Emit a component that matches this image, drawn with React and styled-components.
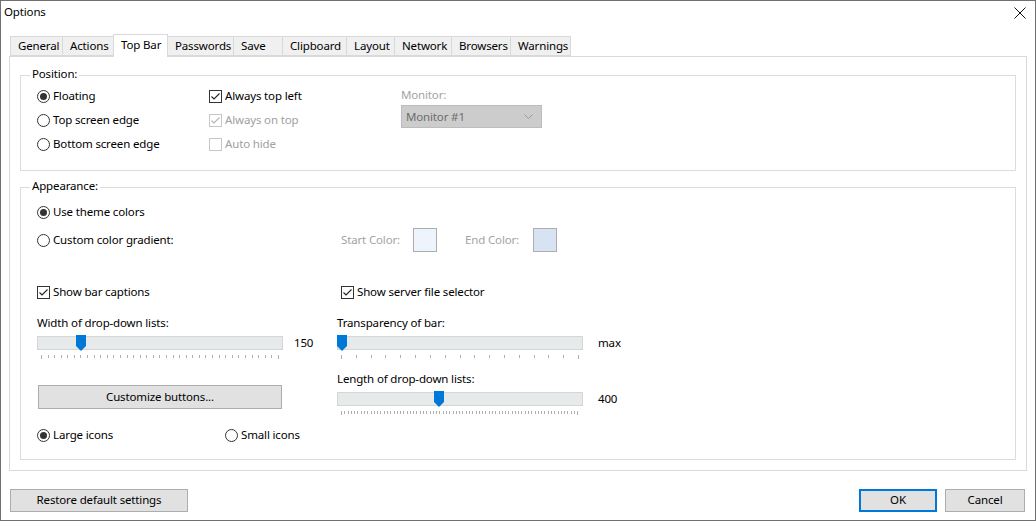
import React from 'react';
import styled, { createGlobalStyle } from 'styled-components';

const GlobalStyle = createGlobalStyle`
  html, body { margin: 0; padding: 0; background: #fff; }
  body {
    font-family: "Noto Sans", "Segoe UI", sans-serif;
    font-size: 11.5px;
    letter-spacing: -0.15px;
    color: #000;
  }
  * { box-sizing: border-box; }
`;

const tabs = [
  { name: 'General', w: 53 },
  { name: 'Actions', w: 52 },
  { name: 'Top Bar', w: 55, active: true },
  { name: 'Passwords', w: 67 },
  { name: 'Save', w: 50 },
  { name: 'Clipboard', w: 65 },
  { name: 'Layout', w: 49 },
  { name: 'Network', w: 58 },
  { name: 'Browsers', w: 60 },
  { name: 'Warnings', w: 61 },
];

export default function App() {
  return (
    <>
      <GlobalStyle />
      <Window>
        <TitleBar>
          <Title>Options</Title>
          <CloseIcon width="12" height="12" viewBox="0 0 12 12">
            <path d="M0.5 0.5 L11.5 11.5 M11.5 0.5 L0.5 11.5" stroke="#111" strokeWidth="1" />
          </CloseIcon>
        </TitleBar>

        <TabStrip>
          {tabs.map((t) => (
            <Tab key={t.name} $w={t.w} $active={t.active}>{t.name}</Tab>
          ))}
        </TabStrip>

        <Panel>
          <Group $h={96}>
            <Legend>Position:</Legend>
            <PositionGrid>
              <Radio on>Floating</Radio>
              <Check on>Always top left</Check>
              <MonitorCell>
                <FieldLabel $disabled>Monitor:</FieldLabel>
                <Select>
                  <span>Monitor #1</span>
                  <svg width="9" height="5" viewBox="0 0 9 5">
                    <path d="M0.5 0.5 L4.5 4.5 L8.5 0.5" fill="none" stroke="#9a9a9a" />
                  </svg>
                </Select>
              </MonitorCell>
              <Radio>Top screen edge</Radio>
              <Check on disabled>Always on top</Check>
              <Radio>Bottom screen edge</Radio>
              <Check disabled>Auto hide</Check>
            </PositionGrid>
          </Group>

          <Group $h={273} $mt={16}>
            <Legend>Appearance:</Legend>
            <AppearanceBody>
              <Row $h={28}>
                <Radio on>Use theme colors</Radio>
              </Row>
              <TwoCol $h={28} $left={304}>
                <Radio>Custom color gradient:</Radio>
                <ColorPickers>
                  <FieldLabel $disabled $w={72}>Start Color:</FieldLabel>
                  <Swatch $c="#eef4fb" />
                  <FieldLabel $disabled $w={68} $ml={28}>End Color:</FieldLabel>
                  <Swatch $c="#d7e3f3" />
                </ColorPickers>
              </TwoCol>
              <TwoCol $h={24} $left={304} $mt={26}>
                <Check on>Show bar captions</Check>
                <Check on>Show server file selector</Check>
              </TwoCol>
              <SliderBlock>
                <Column>
                  <Slider label="Width of drop-down lists:" value="150" frac={0.165} ticks={36} gap={11} />
                  <PushButton>Customize buttons...</PushButton>
                </Column>
                <Column>
                  <Slider label="Transparency of bar:" value="max" frac={0} ticks={16} gap={15} />
                  <Slider label="Length of drop-down lists:" value="400" frac={0.413} ticks={72} gap={15} mt={11} />
                </Column>
              </SliderBlock>
              <Row $h={24} $mt={7}>
                <IconChoice>
                  <Radio on>Large icons</Radio>
                </IconChoice>
                <Radio>Small icons</Radio>
              </Row>
            </AppearanceBody>
          </Group>
        </Panel>

        <Footer>
          <FooterButton $w={178}>Restore default settings</FooterButton>
          <FooterRight>
            <FooterButton $w={78} $primary>OK</FooterButton>
            <FooterButton $w={80}>Cancel</FooterButton>
          </FooterRight>
        </Footer>
      </Window>
    </>
  );
}

function Radio({ on, children }) {
  return (
    <OptionRow>
      <RadioCircle $on={on} />
      <OptionText>{children}</OptionText>
    </OptionRow>
  );
}

function Check({ on, disabled, children }) {
  return (
    <OptionRow>
      <CheckBox $disabled={disabled}>
        {on && (
          <svg width="11" height="11" viewBox="0 0 11 11">
            <polyline points="1.5,5.5 4,8 9.5,2.5" fill="none" stroke={disabled ? '#b4b4b4' : '#222'} strokeWidth="1.1" />
          </svg>
        )}
      </CheckBox>
      <OptionText $disabled={disabled}>{children}</OptionText>
    </OptionRow>
  );
}

function Slider({ label, value, frac, ticks, gap, mt }) {
  const marks = Array.from({ length: ticks + 1 }, (_, i) => i);
  return (
    <SliderField $mt={mt}>
      <FieldLabel>{label}</FieldLabel>
      <SliderRow>
        <SliderBox>
          <Track>
            <Thumb width="10" height="16" viewBox="0 0 10 16" style={{ left: `${3 + frac * 237 - 4.5}px` }}>
              <polygon points="0,0 10,0 10,11 5,16 0,11" fill="#0078d7" />
            </Thumb>
          </Track>
          <Ticks>
            {marks.map((i) => (
              <TickMark key={i} $end={i === 0 || i === ticks} />
            ))}
          </Ticks>
        </SliderBox>
        <SliderValue $gap={gap}>{value}</SliderValue>
      </SliderRow>
    </SliderField>
  );
}

const Window = styled.div`
  width: 1036px;
  height: 521px;
  border: 1px solid #707070;
  background: #fff;
  display: flex;
  flex-direction: column;
`;

const TitleBar = styled.div`
  height: 33px;
  display: flex;
  justify-content: space-between;
  align-items: flex-start;
  padding: 3px 9px 0 3px;
`;

const Title = styled.div`
  line-height: 16px;
`;

const CloseIcon = styled.svg`
  margin-top: 3px;
`;

const TabStrip = styled.div`
  height: 22px;
  display: flex;
  align-items: flex-end;
  padding-left: 9px;
`;

const Tab = styled.div`
  width: ${(p) => p.$w}px;
  height: ${(p) => (p.$active ? 23 : 20)}px;
  margin-left: -1px;
  margin-bottom: ${(p) => (p.$active ? -1 : 0)}px;
  padding-left: 7px;
  line-height: ${(p) => (p.$active ? 19 : 18)}px;
  border: 1px solid #d9d9d9;
  border-bottom: ${(p) => (p.$active ? 'none' : '1px solid #d9d9d9')};
  background: ${(p) => (p.$active ? '#fff' : '#f0f0f0')};
  position: relative;
  z-index: ${(p) => (p.$active ? 2 : 1)};
  white-space: nowrap;
  overflow: hidden;
  &:first-child { margin-left: 0; }
`;

const Panel = styled.div`
  height: 415px;
  margin: 0 8px;
  border: 1px solid #d9d9d9;
  padding: 18px 10px 0 10px;
`;

const Group = styled.section`
  position: relative;
  height: ${(p) => p.$h}px;
  margin-top: ${(p) => p.$mt || 0}px;
  border: 1px solid #dcdcdc;
`;

const Legend = styled.span`
  position: absolute;
  top: -10px;
  left: 9px;
  padding: 0 2px;
  background: #fff;
  line-height: 16px;
`;

const PositionGrid = styled.div`
  display: grid;
  grid-template-columns: 172px 192px 1fr;
  grid-auto-rows: 24px;
  padding: 8px 0 0 16px;
`;

const OptionRow = styled.label`
  display: flex;
  align-items: center;
  height: 24px;
  white-space: nowrap;
`;

const RadioCircle = styled.span`
  width: 13px;
  height: 13px;
  border-radius: 50%;
  border: 1px solid #333;
  margin-right: 3px;
  display: flex;
  align-items: center;
  justify-content: center;
  flex-shrink: 0;
  &::after {
    content: '';
    width: 7px;
    height: 7px;
    border-radius: 50%;
    background: ${(p) => (p.$on ? '#333' : 'transparent')};
  }
`;

const CheckBox = styled.span`
  width: 13px;
  height: 13px;
  border: 1px solid ${(p) => (p.$disabled ? '#c6c6c6' : '#333')};
  margin-right: 3px;
  display: flex;
  align-items: center;
  justify-content: center;
  flex-shrink: 0;
`;

const OptionText = styled.span`
  line-height: 15px;
  margin-bottom: 2px;
  color: ${(p) => (p.$disabled ? '#a0a0a0' : '#000')};
`;

const MonitorCell = styled.div`
  grid-column: 3;
  grid-row: 1 / span 3;
  padding-top: 3px;
  display: flex;
  flex-direction: column;
`;

const FieldLabel = styled.div`
  line-height: 16px;
  height: 16px;
  color: ${(p) => (p.$disabled ? '#a3a3a3' : '#000')};
  width: ${(p) => (p.$w ? `${p.$w}px` : 'auto')};
  margin-left: ${(p) => p.$ml || 0}px;
  white-space: nowrap;
  flex-shrink: 0;
`;

const Select = styled.div`
  width: 141px;
  height: 23px;
  margin-top: 2px;
  background: #cccccc;
  border: 1px solid #bcbcbc;
  color: #6d6d6d;
  display: flex;
  align-items: center;
  justify-content: space-between;
  padding: 0 8px 1px 4px;
`;

const AppearanceBody = styled.div`
  padding: 10px 0 0 16px;
  display: flex;
  flex-direction: column;
`;

const Row = styled.div`
  display: flex;
  align-items: center;
  height: ${(p) => p.$h}px;
  margin-top: ${(p) => p.$mt || 0}px;
`;

const TwoCol = styled.div`
  display: grid;
  grid-template-columns: ${(p) => p.$left}px 1fr;
  align-items: center;
  height: ${(p) => p.$h}px;
  margin-top: ${(p) => p.$mt || 0}px;
`;

const ColorPickers = styled.div`
  display: flex;
  align-items: center;
`;

const Swatch = styled.span`
  width: 24px;
  height: 24px;
  border: 1px solid #adadad;
  background: ${(p) => p.$c};
  flex-shrink: 0;
`;

const SliderBlock = styled.div`
  display: grid;
  grid-template-columns: 300px 1fr;
  align-items: start;
  margin-top: 11px;
`;

const Column = styled.div`
  display: flex;
  flex-direction: column;
  align-items: flex-start;
`;

const SliderField = styled.div`
  margin-top: ${(p) => p.$mt || 0}px;
  display: flex;
  flex-direction: column;
  gap: 4px;
`;

const SliderRow = styled.div`
  display: flex;
  align-items: flex-start;
`;

const SliderBox = styled.div`
  width: 246px;
  height: 25px;
  padding-top: 1px;
`;

const Track = styled.div`
  position: relative;
  height: 14px;
  background: #e7eaea;
  border: 1px solid #d6d6d6;
`;

const Thumb = styled.svg`
  position: absolute;
  top: -2px;
  display: block;
`;

const Ticks = styled.div`
  display: flex;
  justify-content: space-between;
  align-items: flex-start;
  padding: 0 4px;
  margin-top: 5px;
`;

const TickMark = styled.span`
  width: 1px;
  height: ${(p) => (p.$end ? 4 : 3)}px;
  background: #b0b0b0;
`;

const SliderValue = styled.span`
  margin-left: ${(p) => p.$gap}px;
  line-height: 16px;
`;

const PushButton = styled.button`
  width: 244px;
  height: 24px;
  margin: 25px 0 0 1px;
  background: #e1e1e1;
  border: 1px solid #adadad;
  font: inherit;
  letter-spacing: inherit;
  color: #000;
  padding: 0 0 2px;
`;

const IconChoice = styled.div`
  width: 188px;
`;

const Footer = styled.div`
  flex: 1;
  display: flex;
  justify-content: space-between;
  align-items: flex-start;
  padding: 18px 10px 0 9px;
`;

const FooterRight = styled.div`
  display: flex;
  gap: 8px;
`;

const FooterButton = styled.button`
  width: ${(p) => p.$w}px;
  height: 23px;
  background: #e1e1e1;
  border: ${(p) => (p.$primary ? '2px solid #0078d7' : '1px solid #adadad')};
  font: inherit;
  letter-spacing: inherit;
  color: #000;
  padding: 0 0 2px;
`;
